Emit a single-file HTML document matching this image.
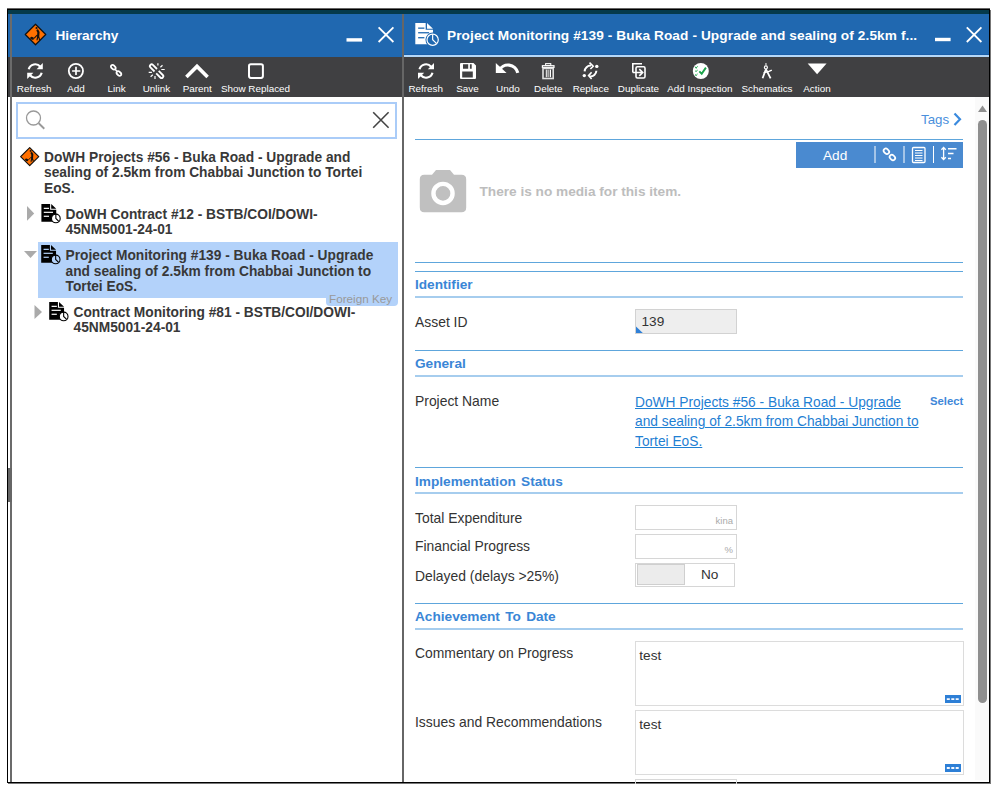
<!DOCTYPE html>
<html><head><meta charset="utf-8">
<style>
*{box-sizing:border-box;margin:0;padding:0}
html,body{width:998px;height:788px;overflow:hidden;background:#fff;font-family:"Liberation Sans",sans-serif;color:#333}
.a{position:absolute}
.frame{left:7px;top:9px;width:983px;height:774px;border:1px solid #000;box-shadow:1px 1px 0 #777,0 -1px 0 #666}
.teal{left:8px;top:10px;width:981px;height:4px;background:#053a4b}
.hdr{background:#2068b0;top:14px;height:43px}
.tb{background:#404042;top:57px;height:40px}
.ht{color:#fff;font-weight:bold;font-size:13.65px;line-height:16px;white-space:nowrap}
.lbl{color:#fff;font-size:9.9px;line-height:12px;width:100px;text-align:center;top:83px;white-space:nowrap}
.tree{font-weight:bold;font-size:13.75px;line-height:15.65px;color:#383838;white-space:nowrap}
.fl{font-size:13.9px;line-height:16px;color:#333;white-space:nowrap;left:415px}
.sh{word-spacing:1.5px;font-weight:bold;font-size:13.65px;line-height:16px;color:#3a86d6;white-space:nowrap;left:415px}
.l1{left:415px;width:548px;height:1px;background:#5ea6dc}
.l2{left:415px;width:548px;height:2px;background:#a6cdee}
.inp{left:635px;width:102px;height:25px;border:1px solid #d6d6d6;background:#fff}
</style></head><body>
<div class="a frame"></div>
<div class="a teal"></div>
<!-- LEFT PANEL -->
<div class="a hdr" style="left:8px;width:394px"></div>
<div class="a tb" style="left:8px;width:394px"></div>
<div class="a" style="left:10px;top:14px;width:2px;height:768px;background:#6b6b6b"></div>
<div class="a" style="left:8px;top:468px;width:4px;height:34px;background:#666"></div>
<!-- divider -->
<div class="a" style="left:402px;top:14px;width:2px;height:768px;background:#666"></div>
<!-- RIGHT PANEL -->
<div class="a hdr" style="left:404px;width:585px;height:41px"></div>
<div class="a" style="left:404px;top:54px;width:585px;height:1px;background:#1a5ea8"></div>
<div class="a" style="left:404px;top:55px;width:585px;height:2px;background:#b5d8f8"></div>
<div class="a tb" style="left:404px;width:585px"></div>

<!-- RIGHT CONTENT -->
<div class="a" style="left:921px;top:112px;font-size:13.3px;line-height:16px;color:#4a8fdc">Tags</div>
<svg class="a" style="left:950px;top:110px" width="16" height="18"><path d="M4.5 3.5 L10 9.3 L4.5 15" fill="none" stroke="#3a8ade" stroke-width="2.2"/></svg>
<div class="a l1" style="top:139px"></div>
<div class="a" style="left:796px;top:142px;width:167px;height:25.5px;background:#4a8ad0"></div>
<div class="a" style="left:823px;top:147.7px;font-size:13.65px;line-height:16px;color:#fff">Add</div>
<svg class="a" style="left:796px;top:142px" width="167" height="26">
 <path d="M79 4 V21 M108 4 V21 M137.5 4 V21" stroke="#fff" stroke-width="1"/>
 <rect x="-3" y="-2.2" width="6" height="4.4" rx="2.2" transform="translate(90.4,9.3) rotate(45)" fill="none" stroke="#fff" stroke-width="1.7"/>
 <rect x="-3" y="-2.2" width="6" height="4.4" rx="2.2" transform="translate(96.4,15.5) rotate(45)" fill="none" stroke="#fff" stroke-width="1.7"/>
 <rect x="116.5" y="5.5" width="12.5" height="15" rx="1" fill="none" stroke="#fff" stroke-width="1.3"/>
 <path d="M119 8.5 H126.5 M119 11 H126.5 M119 13.5 H126.5 M119 16 H126.5 M119 18.5 H126.5" stroke="#fff" stroke-width="1"/>
 <path d="M147.6 5.5 V17.5 M145.4 7.7 L147.6 5.5 L149.8 7.7 M145.4 15.3 L147.6 17.5 L149.8 15.3" fill="none" stroke="#fff" stroke-width="1.3"/>
 <path d="M152 6.7 H160.5 M152 11.5 H157.5 M152 16.5 H155" stroke="#fff" stroke-width="1.5"/>
</svg>
<svg class="a" style="left:419px;top:169px" width="49" height="45">
 <path d="M17 1 H31 L35 5.7 H42.5 Q47.2 5.7 47.2 10.2 V38.5 Q47.2 43.2 42.5 43.2 H5.2 Q0.8 43.2 0.8 38.5 V10.2 Q0.8 5.7 5.2 5.7 H13 Z" fill="#c0c0c0"/>
 <circle cx="24" cy="24.4" r="9.55" fill="none" stroke="#fff" stroke-width="4.4"/>
</svg>
<div class="a" style="left:479.5px;top:183.7px;font-weight:bold;font-size:13.65px;line-height:16px;color:#bdbdbd;white-space:nowrap">There is no media for this item.</div>
<div class="a l1" style="top:262px"></div>
<div class="a l1" style="top:271px"></div>
<div class="a sh" style="top:277px">Identifier</div>
<div class="a l2" style="top:296px"></div>
<div class="a fl" style="top:313.5px">Asset ID</div>
<div class="a" style="left:635px;top:309px;width:102px;height:25px;border:1px solid #d2d2d2;background:#eee"></div>
<svg class="a" style="left:636px;top:326px" width="8" height="8"><path d="M0 0.5 L6.8 7 H0 Z" fill="#2f80d8"/></svg>
<div class="a" style="left:641.5px;top:313.5px;font-size:13.65px;line-height:16px;color:#333">139</div>
<div class="a l1" style="top:350px"></div>
<div class="a sh" style="top:356px">General</div>
<div class="a l2" style="top:375px"></div>
<div class="a fl" style="top:393px">Project Name</div>
<div class="a" style="left:635px;top:392.8px;font-size:13.75px;line-height:19.4px;color:#1f80d3;text-decoration:underline;white-space:nowrap">DoWH Projects #56 - Buka Road - Upgrade<br>and sealing of 2.5km from Chabbai Junction to<br>Tortei EoS.</div>
<div class="a" style="left:930px;top:395px;font-weight:bold;font-size:11.3px;line-height:13px;color:#3f88d9">Select</div>
<div class="a l1" style="top:467px"></div>
<div class="a sh" style="top:473.5px">Implementation Status</div>
<div class="a l2" style="top:492px"></div>
<div class="a fl" style="top:510px">Total Expenditure</div>
<div class="a inp" style="top:505px;height:25px"></div>
<div class="a" style="left:700px;top:515px;width:33px;text-align:right;font-size:9.5px;line-height:11px;color:#aaa">kina</div>
<div class="a fl" style="top:538.3px">Financial Progress</div>
<div class="a inp" style="top:534px;height:24.5px"></div>
<div class="a" style="left:700px;top:544px;width:33px;text-align:right;font-size:9.5px;line-height:11px;color:#aaa">%</div>
<div class="a fl" style="top:567.5px">Delayed (delays &gt;25%)</div>
<div class="a" style="left:635px;top:562.5px;width:100px;height:24.5px;border:1px solid #d6d6d6;background:#fff"></div>
<div class="a" style="left:637px;top:564px;width:48px;height:21px;border:1px solid #cfcfcf;background:#ececec"></div>
<div class="a" style="left:701px;top:566.5px;font-size:13.65px;line-height:16px;color:#333">No</div>
<div class="a l1" style="top:603px"></div>
<div class="a sh" style="top:608.8px">Achievement To Date</div>
<div class="a l2" style="top:628px"></div>
<div class="a fl" style="top:645px">Commentary on Progress</div>
<div class="a" style="left:635px;top:641px;width:328.5px;height:65px;border:1px solid #dcdcdc;background:#fff"></div>
<div class="a" style="left:639.3px;top:648px;font-size:13.65px;line-height:16px;color:#333">test</div>
<div class="a" style="left:944.5px;top:694.7px;width:16.3px;height:8.8px;background:#2d7fd6"></div>
<div class="a fl" style="top:713.5px">Issues and Recommendations</div>
<div class="a" style="left:635px;top:710px;width:328.5px;height:65px;border:1px solid #dcdcdc;background:#fff"></div>
<div class="a" style="left:639.3px;top:717px;font-size:13.65px;line-height:16px;color:#333">test</div>
<div class="a" style="left:944.5px;top:763.5px;width:16.3px;height:8.8px;background:#2d7fd6"></div>
<div class="a" style="left:635px;top:779px;width:102px;height:5px;border:1px solid #d8d8d8;border-bottom:none"></div>
<svg class="a" style="left:944px;top:694px" width="18" height="80">
 <path d="M2.8 5.2 H5.8 M7.3 5.2 H10.3 M11.7 5.2 H14.7" stroke="#f4f8ff" stroke-width="1.8"/>
 <path d="M2.8 74 H5.8 M7.3 74 H10.3 M11.7 74 H14.7" stroke="#f4f8ff" stroke-width="1.8"/>
</svg>
<!-- scrollbar -->
<div class="a" style="left:975px;top:97px;width:14px;height:683px;background:#fafafa"></div>
<div class="a" style="left:978px;top:120px;width:9px;height:583px;background:#8f8f8f;border-radius:5px"></div>
<svg class="a" style="left:978px;top:105px" width="9" height="7"><path d="M4.5 0.5 L9 7 L0 7Z" fill="#8f8f8f"/></svg>


<!-- TREE -->
<svg class="a" style="left:0;top:0" width="400" height="340">
<g transform="translate(19.9,146.8) scale(0.817)">
 <path d="M12 0.9 L23.1 12 L12 23.1 L0.9 12 Z" fill="#ff7000" stroke="#111" stroke-width="1.4" stroke-linejoin="round"/>
 <circle cx="13.1" cy="5.0" r="1.15" fill="#111"/>
 <path d="M14.2 7.6 L15.2 9.5 L14.9 13.5" stroke="#111" stroke-width="2.4" fill="none" stroke-linecap="round"/>
 <path d="M14.7 13 L13.7 17.8 M15 13 L16.3 17.4" stroke="#111" stroke-width="1.3" fill="none" stroke-linecap="round"/>
 <path d="M10.4 16.1 L13.8 12.6" stroke="#111" stroke-width="1.1" fill="none"/>
 <ellipse cx="8.3" cy="16.1" rx="2.1" ry="1.5" transform="rotate(20 8.3 16.1)" fill="#111"/>
</g>
<path d="M27 206 L34.2 213.4 L27 220.8 Z" fill="#aaa"/>
<path d="M24 251 H37 L30.5 258 Z" fill="#aaa"/>
<path d="M34.5 305 L42 312 L34.5 319 Z" fill="#aaa"/>
</svg>
<div class="a" style="left:38px;top:241.5px;width:360px;height:56.5px;background:#b3d2fa"></div>
<div class="a" style="left:326px;top:290px;width:72px;height:16px;background:#b3d2fa;border-radius:0 0 4px 4px"></div>
<div class="a" style="left:329px;top:292px;font-size:11.7px;line-height:13px;color:#999;white-space:nowrap">Foreign Key</div>
<svg class="a" style="left:0;top:0" width="400" height="340">
<g transform="translate(41.4,204) scale(0.99)">
 <path d="M0 0 H8.8 V5.9 H15 V18 H0 Z M9.9 0 L15 4.9 H9.9 Z" fill="#000"/>
 <rect x="2.4" y="3.8" width="5.3" height="1.2" fill="#fff"/><rect x="2.4" y="7.8" width="9.3" height="1.2" fill="#fff"/><rect x="2.4" y="11.8" width="5.3" height="1.2" fill="#fff"/>
 <circle cx="14.6" cy="14.6" r="4.4" fill="#fff" stroke="#000" stroke-width="1.1"/>
 <path d="M14.6 9.7 V14.6 L17.6 17.6" stroke="#000" stroke-width="1.1" fill="none"/>
</g>
<g transform="translate(41.2,245) scale(0.99)">
 <path d="M0 0 H8.8 V5.9 H15 V18 H0 Z M9.9 0 L15 4.9 H9.9 Z" fill="#000"/>
 <rect x="2.4" y="3.8" width="5.3" height="1.2" fill="#b3d2fa"/><rect x="2.4" y="7.8" width="9.3" height="1.2" fill="#b3d2fa"/><rect x="2.4" y="11.8" width="5.3" height="1.2" fill="#b3d2fa"/>
 <circle cx="14.6" cy="14.6" r="4.4" fill="#b3d2fa" stroke="#000" stroke-width="1.1"/>
 <path d="M14.6 9.7 V14.6 L17.6 17.6" stroke="#000" stroke-width="1.1" fill="none"/>
</g>
<g transform="translate(49.2,302) scale(0.99)">
 <path d="M0 0 H8.8 V5.9 H15 V18 H0 Z M9.9 0 L15 4.9 H9.9 Z" fill="#000"/>
 <rect x="2.4" y="3.8" width="5.3" height="1.2" fill="#fff"/><rect x="2.4" y="7.8" width="9.3" height="1.2" fill="#fff"/><rect x="2.4" y="11.8" width="5.3" height="1.2" fill="#fff"/>
 <circle cx="14.6" cy="14.6" r="4.4" fill="#fff" stroke="#000" stroke-width="1.1"/>
 <path d="M14.6 9.7 V14.6 L17.6 17.6" stroke="#000" stroke-width="1.1" fill="none"/>
</g>
</svg>
<div class="a tree" style="left:44px;top:149.8px">DoWH Projects #56 - Buka Road - Upgrade and<br>sealing of 2.5km from Chabbai Junction to Tortei<br>EoS.</div>
<div class="a tree" style="left:65.5px;top:206.8px">DoWH Contract #12 - BSTB/COI/DOWI-<br>45NM5001-24-01</div>
<div class="a tree" style="left:65.5px;top:247.9px">Project Monitoring #139 - Buka Road - Upgrade<br>and sealing of 2.5km from Chabbai Junction to<br>Tortei EoS.</div>
<div class="a tree" style="left:73.5px;top:304.8px">Contract Monitoring #81 - BSTB/COI/DOWI-<br>45NM5001-24-01</div>
<!-- left header -->
<div class="a ht" style="left:55.5px;top:28.4px">Hierarchy</div>
<!-- right header -->
<div class="a ht" style="left:447px;top:28.4px;letter-spacing:0.1px">Project Monitoring #139 - Buka Road - Upgrade and sealing of 2.5km f...</div>


<div class="a lbl" style="left:-15.9px">Refresh</div>
<div class="a lbl" style="left:26px">Add</div>
<div class="a lbl" style="left:66.6px">Link</div>
<div class="a lbl" style="left:106.4px">Unlink</div>
<div class="a lbl" style="left:147.2px">Parent</div>
<div class="a lbl" style="left:205.5px">Show Replaced</div>
<div class="a lbl" style="left:375.7px">Refresh</div>
<div class="a lbl" style="left:417.5px">Save</div>
<div class="a lbl" style="left:457.9px">Undo</div>
<div class="a lbl" style="left:498.3px">Delete</div>
<div class="a lbl" style="left:540.8px">Replace</div>
<div class="a lbl" style="left:588.4px">Duplicate</div>
<div class="a lbl" style="left:649.9px">Add Inspection</div>
<div class="a lbl" style="left:717px">Schematics</div>
<div class="a lbl" style="left:767px">Action</div>
<div class="a" style="left:16px;top:102px;width:381px;height:37px;border:2px solid #aaccf8"></div>

<svg class="a" style="left:0;top:0" width="998" height="788" viewBox="0 0 998 788">
<!-- left header worker icon -->
<g transform="translate(24.4,23.4) scale(0.925)">
 <path d="M12 0.9 L23.1 12 L12 23.1 L0.9 12 Z" fill="#ff7000" stroke="#111" stroke-width="1.3" stroke-linejoin="round"/>
 <circle cx="13.1" cy="5.0" r="1.15" fill="#111"/>
 <path d="M14.2 7.6 L15.2 9.5 L14.9 13.5" stroke="#111" stroke-width="2.4" fill="none" stroke-linecap="round"/>
 <path d="M14.7 13 L13.7 17.8 M15 13 L16.3 17.4" stroke="#111" stroke-width="1.3" fill="none" stroke-linecap="round"/>
 <path d="M10.4 16.1 L13.8 12.6" stroke="#111" stroke-width="1.1" fill="none"/>
 <ellipse cx="8.3" cy="16.1" rx="2.1" ry="1.5" transform="rotate(20 8.3 16.1)" fill="#111"/>
</g>
<!-- left header min/close -->
<rect x="346.5" y="38.2" width="15.6" height="3.4" fill="#fff"/>
<path d="M378.6 27.4 L393.4 42 M393.4 27.4 L378.6 42" stroke="#fff" stroke-width="1.8"/>
<!-- right header doc icon -->
<g transform="translate(415.3,22.9) scale(1.18)">
 <path d="M0 0 H8.8 V5.9 H15 V18 H0 Z" fill="#fff"/>
 <path d="M9.9 0 L15 4.9 H9.9 Z" fill="#fff"/>
 <rect x="2.4" y="3.9" width="5.3" height="1.1" fill="#2068b0"/>
 <rect x="2.4" y="7.8" width="9.3" height="1.1" fill="#2068b0"/>
 <rect x="2.4" y="12" width="5.3" height="1.1" fill="#2068b0"/>
 <circle cx="14.7" cy="14.3" r="6.1" fill="#2068b0"/>
 <circle cx="14.7" cy="14.3" r="4.8" fill="#2068b0" stroke="#fff" stroke-width="1"/>
 <path d="M14.7 9.6 V14.3 L17.9 17.3" stroke="#fff" stroke-width="1" fill="none"/>
</g>
<rect x="935" y="37.8" width="15.6" height="3.4" fill="#fff"/>
<path d="M966.8 27.4 L981.4 42 M981.4 27.4 L966.8 42" stroke="#fff" stroke-width="1.8"/>

<!-- LEFT TOOLBAR ICONS -->
<g fill="none" stroke="#fff">
 <path d="M28.73 69.27 A6.7 6.7 0 0 1 40.33 66.69" stroke-width="2.2"/>
 <path d="M41.67 72.73 A6.7 6.7 0 0 1 30.07 75.31" stroke-width="2.2"/>
 <circle cx="75.9" cy="71" r="7.1" stroke-width="1.8"/>
 <path d="M72.1 71 H80.3 M76 66.8 V75" stroke-width="1.7"/>
 <rect x="-2.7" y="-1.7" width="5.4" height="3.4" rx="1.7" transform="translate(113.3,67.3) rotate(45)" stroke-width="1.8"/>
 <rect x="-2.7" y="-1.7" width="5.4" height="3.4" rx="1.7" transform="translate(118.9,73.5) rotate(45)" stroke-width="1.8"/>
 <path d="M115.3 69.5 L117 71.3" stroke-width="1.6"/>
 <path d="M157 69 L152.9 64.9 A1.75 1.75 0 0 0 150.4 67.4 L154.5 71.5" stroke-width="1.8"/>
 <path d="M158.7 70.9 L162.8 75 A1.75 1.75 0 0 1 160.3 77.5 L156.2 73.4" stroke-width="1.8"/>
 <path d="M157.9 63.2 V65.5 M160.4 67.2 L162.5 65.3 M161.3 69.5 H164.7 M148.7 72.4 H151.9 M150.6 76.7 L152.8 74.8 M155 76 V78.9" stroke-width="1.2"/>
 <path d="M186.4 77 L197 66.4 L207.6 77" stroke-width="3.6"/>
 <rect x="249" y="64.3" width="13.9" height="13.6" rx="1.8" stroke-width="2"/>
</g>
<path d="M42.8 63 V69.2 H36.6 Z M27.2 79 V72.8 H33.4 Z" fill="#fff"/>

<!-- search -->
<circle cx="33.5" cy="118" r="7" fill="none" stroke="#999" stroke-width="1.3"/>
<path d="M38.7 123.3 L44.3 128.8" stroke="#999" stroke-width="1.9"/>
<path d="M373.2 112.3 L388.6 127.7 M388.6 112.3 L373.2 127.7" stroke="#444" stroke-width="1.6"/>

<!-- RIGHT TOOLBAR ICONS -->
<g fill="none" stroke="#fff">
 <path d="M419.53 69.27 A6.7 6.7 0 0 1 431.13 66.69" stroke-width="2.2"/>
 <path d="M432.47 72.73 A6.7 6.7 0 0 1 420.87 75.31" stroke-width="2.2"/>
 <path d="M498.94 70.77 A10 10 0 0 1 517.78 72.92" stroke-width="3.2"/>
 <path d="M584.6 71.4 A6 6 0 0 1 591 65.6" stroke-width="2"/>
 <path d="M596.4 70.8 A6 6 0 0 1 590 76.4" stroke-width="2"/>
 <rect x="545.6" y="63.6" width="5.2" height="1.8" stroke-width="1"/>
 <rect x="542.4" y="65.7" width="11.6" height="1.8" stroke-width="1.2"/>
 <rect x="543" y="68.4" width="10.2" height="10.1" stroke="#e0e0e0" stroke-width="1.6"/>
 <path d="M632.8 72.6 V63.8 H642" stroke-width="1.6"/>
 <rect x="636" y="66.8" width="9" height="11.2" rx="1.4" stroke-width="1.6"/>
 <path d="M632.8 72.5 H642.6 M639.3 69.1 L642.7 72.5 L639.3 75.9" stroke-width="1.6"/>
 <path d="M765.9 69.2 L762.6 78.2 M765.9 69.2 L770.6 78.4" stroke-width="1.8"/>
 <circle cx="765.9" cy="67.4" r="1.5" stroke-width="1.2"/>
 <path d="M763.6 72.6 Q768 72.4 771.8 70.2" stroke-width="1.4"/>
</g>
<path d="M434 63 V69.2 H427.8 Z M418 79 V72.8 H424.2 Z" fill="#fff"/>
<path d="M495.8 63 V72.9 H506.6 Z" fill="#fff"/>
<path d="M460 64 Q460 63 461 63 H473.5 L476 65.5 V78 Q476 79 475 79 H461 Q460 79 460 78 Z M463 64.3 V68.8 H468.2 V64.3 Z M469.9 64.3 V68.8 H471.7 V64.3 Z M462.2 71.4 V77.6 H472.8 V71.4 Z" fill="#fff" fill-rule="evenodd"/>
<rect x="545.8" y="69.6" width="1" height="7.6" fill="#fff"/>
<rect x="547.3" y="69.6" width="2.2" height="7.6" fill="#aaa"/>
<rect x="550" y="69.6" width="1" height="7.6" fill="#fff"/>
<path d="M589.5 62.6 L593.2 66.3 L590.4 69" fill="none" stroke="#fff" stroke-width="1.6"/>
<path d="M591.6 72.3 L588.6 75.6 L591.6 79" fill="none" stroke="#fff" stroke-width="1.6"/>
<circle cx="596.8" cy="66.4" r="1.7" fill="#fff"/>
<circle cx="584.3" cy="75.6" r="1.7" fill="#fff"/>
<rect x="765.3" y="63" width="1.3" height="3" fill="#ccc"/>
<circle cx="700.8" cy="71" r="8" fill="#fff"/>
<path d="M699.3 71.4 L701.7 73.7 L705.9 67.6" fill="none" stroke="#1aa34a" stroke-width="1.9"/>
<path d="M695.3 67.2 L696.8 68.1 M697.4 66.7 L697.8 66.4 M695.3 71.1 L696.8 71.1 M697.2 70.3 L697.6 70.1 M695.3 74.6 L696.7 75.5 M697.1 74 L697.5 73.8" stroke="#1aa34a" stroke-width="1.4"/>
<path d="M807.7 63.6 H826.6 L817.1 74.2 Z" fill="#fff"/>
</svg>
</body></html>
